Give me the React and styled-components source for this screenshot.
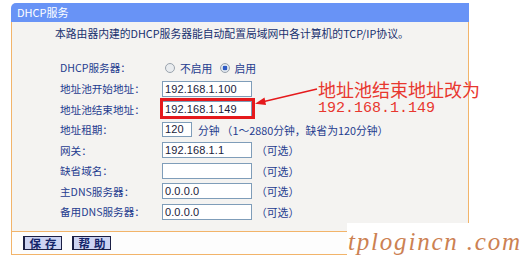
import React from "react";
import styled, { createGlobalStyle } from "styled-components";

const Global = createGlobalStyle`
  html, body { margin: 0; padding: 0; background: #ffffff; }
  body { font-family: "Noto Sans CJK SC", "Noto Sans", sans-serif; }
`;

const Page = styled.div`
  position: relative;
  width: 522px;
  height: 263px;
  padding: 3px 0 0 11px;
  box-sizing: border-box;
  overflow: hidden;
`;

const Panel = styled.div`
  width: 458px;
`;

const Header = styled.div`
  height: 19px;
  line-height: 19px;
  background: #6893f6;
  border-radius: 5px 0 0 0;
  color: #ffffff;
  font-size: 11px;
  padding-left: 6px;
`;

const Body = styled.div`
  height: 209px;
  box-sizing: border-box;
  background: #f4f3f1;
  border-left: 1px solid #f2b46a;
  border-right: 1px solid #f2b46a;
  padding: 1px 0 0 43px;
`;

const Desc = styled.div`
  line-height: 20px;
  font-size: 10.8px;
  color: #17306e;
  white-space: nowrap;
`;

const Form = styled.div`
  margin: 14.7px 0 0 5px;
  display: grid;
  grid-template-columns: 102px auto;
  grid-auto-rows: 20.57px;
  align-items: center;
`;

const Label = styled.div`
  font-size: 10.6px;
  color: #1f3c8f;
  white-space: nowrap;
`;

const Control = styled.div`
  display: flex;
  align-items: center;
  font-size: 10.8px;
  color: #1f3c8f;
  white-space: nowrap;
`;

const Radio = styled.span`
  display: inline-block;
  width: 8px;
  height: 8px;
  border-radius: 50%;
  border: 1px solid #9aa3ad;
  background: ${(p) =>
    p.$on
      ? "radial-gradient(circle, #2f5bc4 0 2.2px, #dfe6ee 2.6px)"
      : "#e9ecef"};
  margin: 0 ${(p) => p.$gap}px 0 ${(p) => p.$left}px;
`;

const Input = styled.div`
  box-sizing: border-box;
  width: ${(p) => p.$w}px;
  height: ${(p) => p.$h}px;
  border: 1px solid #7f9db9;
  background: #ffffff;
  font-family: "Liberation Sans", Arial, sans-serif;
  font-size: 11px;
  line-height: ${(p) => p.$h - 2}px;
  padding-left: 2px;
  color: #1a1a3a;
  letter-spacing: 0.1px;
`;

const Unit = styled.span`
  margin-left: ${(p) => p.$ml}px;
`;

const Footer = styled.div`
  height: 22px;
  border: 1px solid #f2b46a;
  background: #fdfdfd;
  display: flex;
  align-items: center;
  gap: 10px;
  padding-left: 11px;
`;

const Button = styled.div`
  box-sizing: border-box;
  width: 39px;
  height: 14px;
  display: flex;
  align-items: center;
  justify-content: center;
  background: #cdd4f2;
  border: 1px solid #1b1f44;
  border-left-width: 2px;
  color: #14256a;
  font-size: 11.5px;
  font-weight: bold;
  line-height: 12px;
  letter-spacing: 4px;
  padding-left: 4px;
  white-space: nowrap;
`;

const RedBox = styled.div`
  position: absolute;
  left: 160px;
  top: 98px;
  width: 95px;
  height: 21px;
  box-sizing: border-box;
  border: 3px solid #e5191c;
`;

const Arrow = styled.svg`
  position: absolute;
  left: 250px;
  top: 82px;
`;

const Note = styled.div`
  position: absolute;
  left: 318px;
  top: 80px;
  color: #e8372f;
  font-size: 18px;
  line-height: 19px;
  white-space: nowrap;
`;

const NoteIp = styled.div`
  font-family: "Liberation Mono", monospace;
  font-size: 15px;
  line-height: 17px;
  margin-top: 1px;
`;

const Watermark = styled.div`
  position: absolute;
  left: 347px;
  top: 223px;
  width: 175px;
  height: 40px;
  background: #ffffff;
  color: #cc8152;
  font-family: "Liberation Serif", serif;
  font-style: italic;
  font-size: 25px;
  line-height: 38px;
  padding-left: 1px;
  letter-spacing: 1.8px;
  white-space: pre;
`;

const rows = [
  { label: "地址池开始地址：", value: "192.168.1.100" },
  { label: "地址池结束地址：", value: "192.168.1.149" },
];

const rows2 = [
  { label: "网关：", value: "192.168.1.1" },
  { label: "缺省域名：", value: "" },
  { label: "主DNS服务器：", value: "0.0.0.0" },
  { label: "备用DNS服务器：", value: "0.0.0.0" },
];

export default function App() {
  return (
    <>
      <Global />
      <Page>
        <Panel>
          <Header>DHCP服务</Header>
          <Body>
            <Desc>本路由器内建的DHCP服务器能自动配置局域网中各计算机的TCP/IP协议。</Desc>
            <Form>
              <Label>DHCP服务器：</Label>
              <Control>
                <Radio $left={3} $gap={5} />
                <span>不启用</span>
                <Radio $on $left={8} $gap={4} />
                <span>启用</span>
              </Control>
              {rows.map((r) => (
                <React.Fragment key={r.label}>
                  <Label>{r.label}</Label>
                  <Control>
                    <Input $w={90} $h={16}>{r.value}</Input>
                  </Control>
                </React.Fragment>
              ))}
              <Label>地址租期：</Label>
              <Control>
                <Input $w={30} $h={15}>120</Input>
                <Unit $ml={6}>分钟</Unit>
                <Unit $ml={2}>（1～2880分钟，缺省为120分钟）</Unit>
              </Control>
              {rows2.map((r) => (
                <React.Fragment key={r.label}>
                  <Label>{r.label}</Label>
                  <Control>
                    <Input $w={90} $h={16}>{r.value}</Input>
                    <Unit $ml={4}>（可选）</Unit>
                  </Control>
                </React.Fragment>
              ))}
            </Form>
          </Body>
          <Footer>
            <Button>保存</Button>
            <Button>帮助</Button>
          </Footer>
        </Panel>
        <RedBox />
        <Arrow width="70" height="28" viewBox="0 0 70 28">
          <line x1="67" y1="7" x2="12" y2="20" stroke="#e5191c" strokeWidth="1.4" />
          <polygon points="5,21.8 14.5,15.5 16,23" fill="#e5191c" />
        </Arrow>
        <Note>
          <div>地址池结束地址改为</div>
          <NoteIp>192.168.1.149</NoteIp>
        </Note>
        <Watermark>{"tplogincn .com"}</Watermark>
      </Page>
    </>
  );
}
